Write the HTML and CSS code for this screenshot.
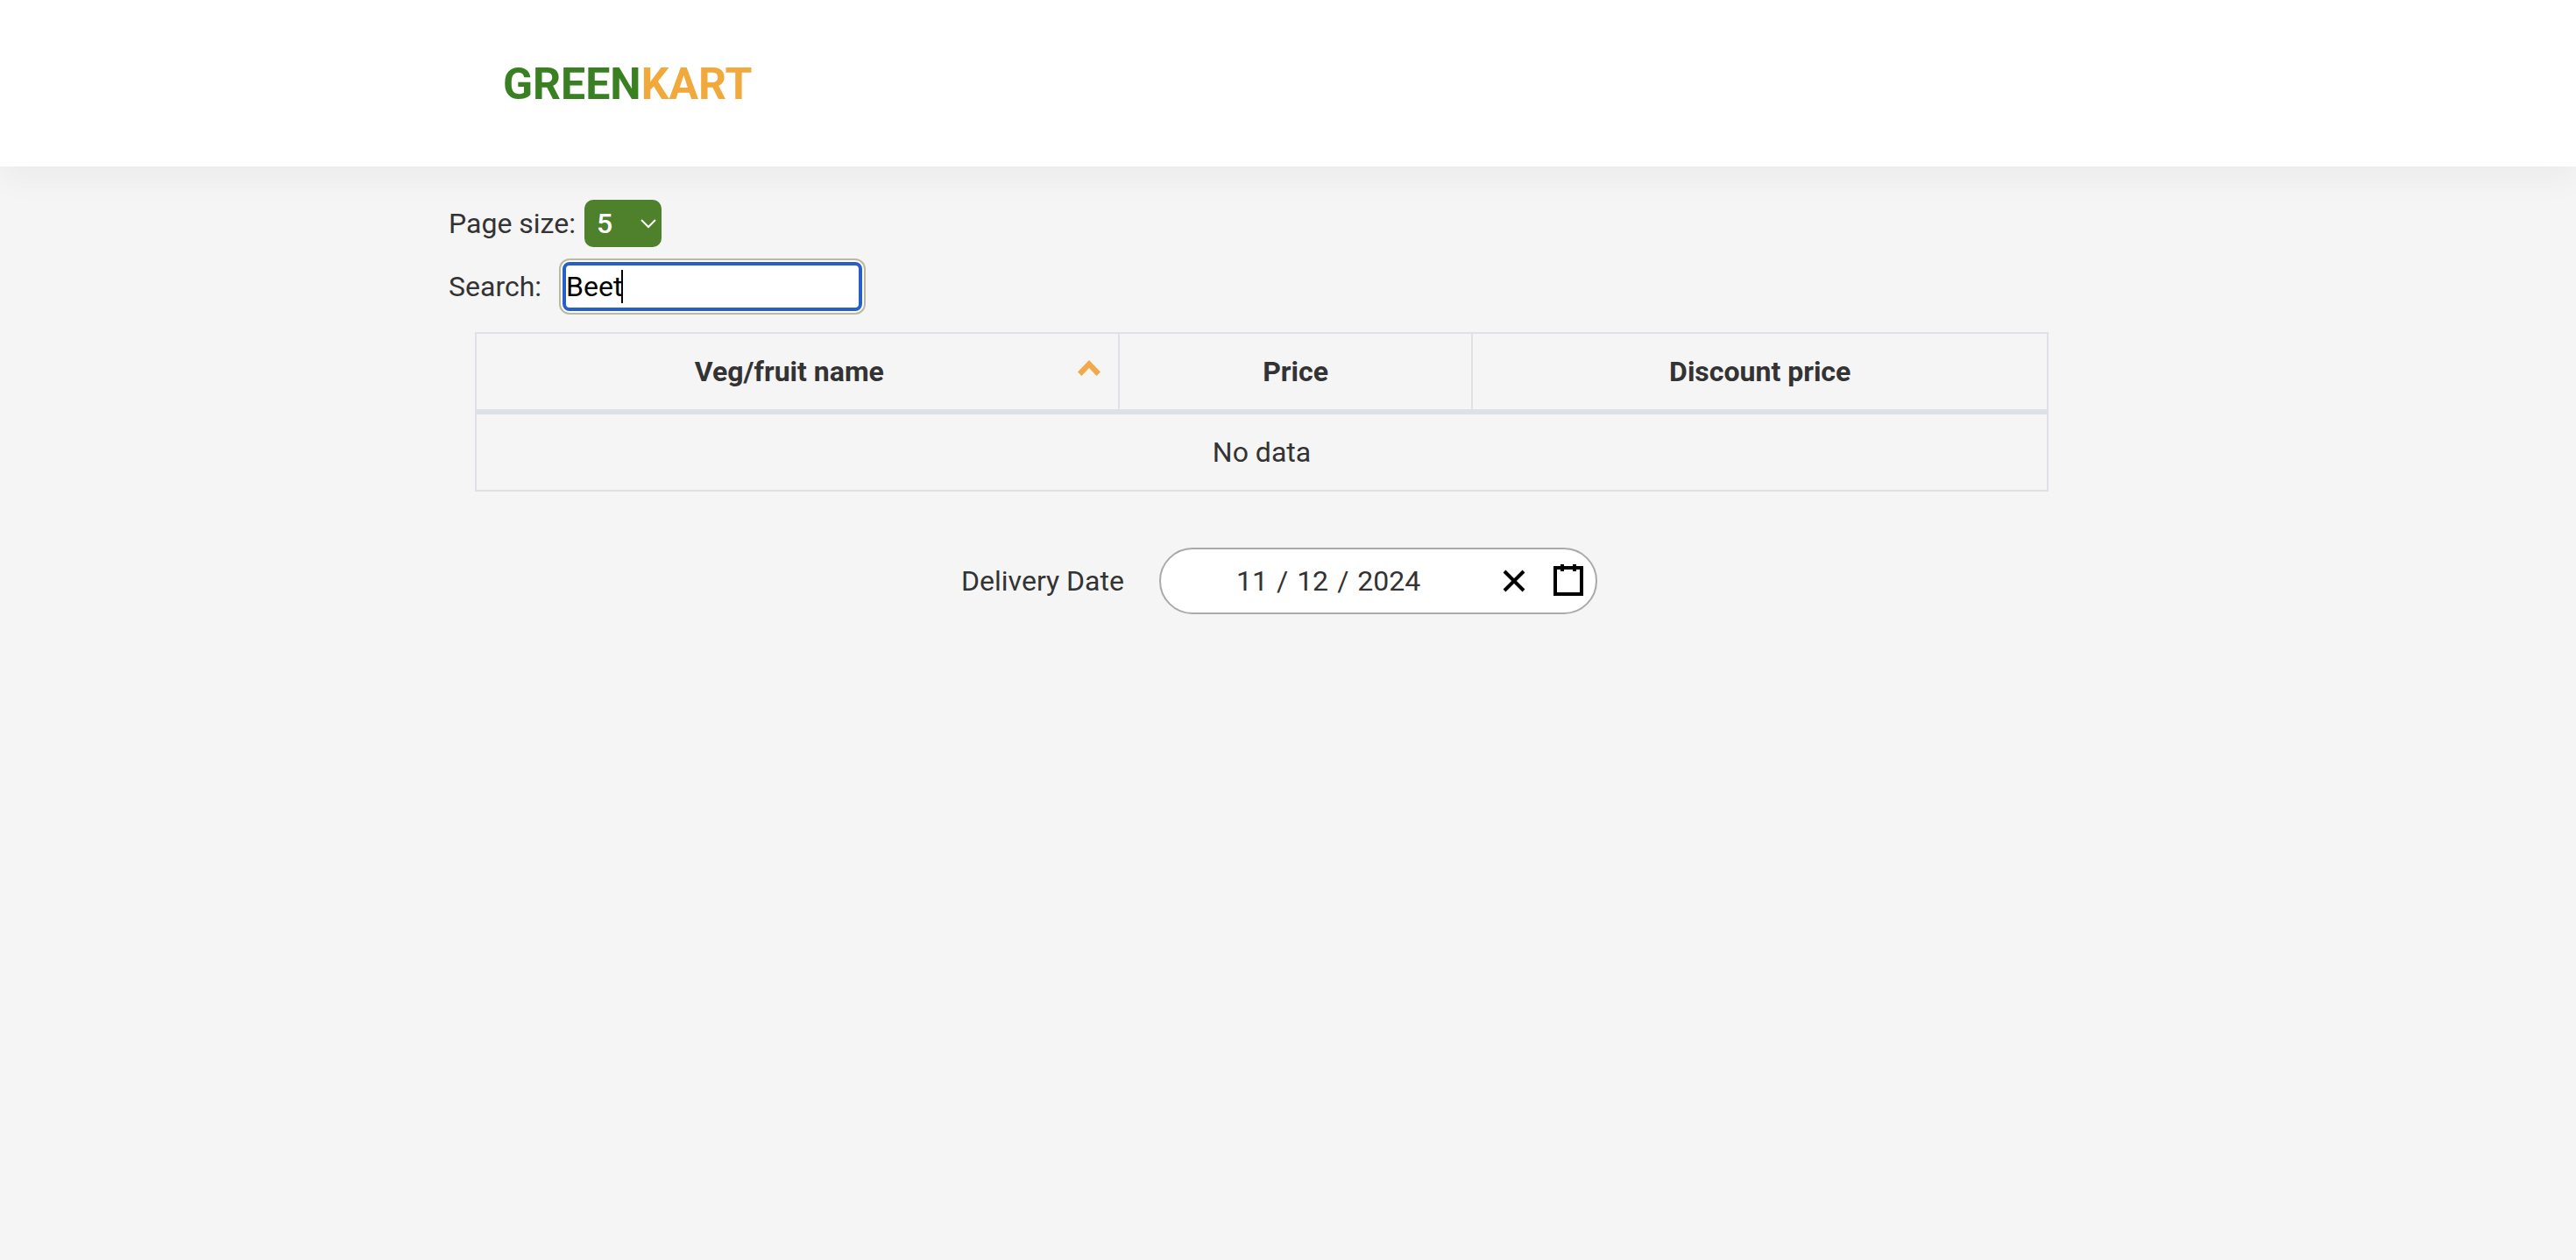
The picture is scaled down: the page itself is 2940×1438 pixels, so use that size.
FILE: index.html
```html
<!DOCTYPE html>
<html lang="en">
<head>
<meta charset="utf-8">
<title>GreenKart</title>
<link rel="stylesheet" href="styles.css">
</head>
<body>
<header class="site-header">
  <div class="container">
    <a class="brand" href="#">GREEN<span class="brand-accent">KART</span></a>
  </div>
</header>
<main class="container">
  <div class="control-row">
    <label for="page-size">Page size:</label>
    <span class="select-wrap">
      <select id="page-size" class="page-size">
        <option selected>5</option>
        <option>10</option>
        <option>20</option>
      </select>
      <svg class="chevron" viewBox="0 0 18 11" aria-hidden="true"><path d="M1 1l8 8 8-8" fill="none" stroke="#fff" stroke-width="2"/></svg>
    </span>
  </div>
  <div class="control-row search-row">
    <label for="search-field">Search:</label>
    <span class="search-wrap">
      <input id="search-field" class="search-input" type="text" value="Beet">
      <span class="text-cursor" aria-hidden="true"></span>
    </span>
  </div>
  <div class="table-wrap">
    <table class="offers">
      <colgroup><col class="col-name"><col class="col-price"><col></colgroup>
      <thead>
        <tr>
          <th scope="col" aria-sort="ascending">
            <div class="sort-head"><span class="sort-title">Veg/fruit name</span>
            <svg class="sort-icon" viewBox="0 0 26 18" aria-hidden="true"><path d="M13 0L26 13.5 21.5 18 13 9 4.500 18 0 13.500z" fill="#f1a94b"/></svg></div>
          </th>
          <th scope="col">Price</th>
          <th scope="col">Discount price</th>
        </tr>
      </thead>
      <tbody>
        <tr><td colspan="3">No data</td></tr>
      </tbody>
    </table>
  </div>
  <div class="delivery">
    <label for="month">Delivery Date</label>
    <div class="date-picker">
      <div class="date-fields">
        <input id="month" class="date-part" type="text" value="11" aria-label="Month">
        <span>/</span>
        <input class="date-part" type="text" value="12" aria-label="Day">
        <span>/</span>
        <input class="date-part date-year" type="text" value="2024" aria-label="Year">
      </div>
      <button class="icon-button" type="button" aria-label="Clear date">
        <svg viewBox="0 0 19 19" stroke="#000" stroke-width="2"><path d="M4 4l11 11M15 4L4 15"/></svg>
      </button>
      <button class="icon-button" type="button" aria-label="Open calendar">
        <svg viewBox="0 0 19 19" stroke="#000" stroke-width="2" fill="none"><rect x="2" y="2" width="15" height="15"/><path d="M6 0v4M13 0v4"/></svg>
      </button>
    </div>
  </div>
</main>
</body>
</html>
```

FILE: styles.css
```css
* {
  box-sizing: border-box;
}

body {
  margin: 0;
  padding-right: 60px;
  background: #f5f5f5;
  color: #333;
  font: 32px/48px Roboto, sans-serif;
}

input,
select,
button {
  margin: 0;
  font: inherit;
}

.container {
  max-width: 1856px;
  margin: 0 auto;
}

.site-header {
  margin-right: -60px;
  padding: 60px 60px 60px 0;
  background: #fff;
  box-shadow: 0 16px 32px rgba(0, 0, 0, 0.04);
}

.brand {
  display: block;
  padding: 2px 0 0 62px;
  color: #388022;
  font-size: 50px;
  font-weight: 700;
  line-height: 68px;
  text-decoration: none;
}

.brand-accent {
  color: #f2a93b;
}

.control-row {
  display: flex;
  align-items: center;
  gap: 10px;
  padding-top: 38px;
}

.select-wrap {
  display: grid;
  align-items: center;
}

.page-size {
  grid-area: 1 / 1;
  width: 88px;
  height: 54px;
  padding: 0 14px;
  appearance: none;
  border: 0;
  border-radius: 10px;
  background: #4f802b;
  color: #fff;
  font-weight: 500;
}

.chevron {
  grid-area: 1 / 1;
  justify-self: end;
  width: 18px;
  height: 11px;
  margin-right: 6px;
  pointer-events: none;
}

.search-row {
  gap: 24px;
  padding-top: 17px;
}

.search-wrap {
  display: flex;
  position: relative;
}

.search-input {
  width: 342px;
  height: 56px;
  padding: 0;
  border: 4px solid #275fc8;
  border-radius: 8px;
  outline: 0;
  background: #fff;
  box-shadow: 0 0 0 2px #fff, 0 0 0 4px #bab9a4;
  color: #000;
}

.text-cursor {
  position: absolute;
  top: 9px;
  left: 67px;
  width: 2px;
  height: 38px;
  background: #000;
}

.table-wrap {
  padding: 24px 30px 0;
}

.offers {
  width: 100%;
  border-collapse: collapse;
  table-layout: fixed;
  text-align: center;
}

.col-name {
  width: 40.9%;
}

.col-price {
  width: 22.5%;
}

.offers th,
.offers td {
  padding: 19px 20px;
  border: 2px solid #dee2e6;
}

.offers th {
  border-bottom-width: 6px;
}

.sort-head {
  display: flex;
  align-items: center;
}

.sort-title {
  flex: 1;
  padding-left: 8px;
}

.sort-icon {
  width: 26px;
  height: 18px;
  margin-bottom: 8px;
}

.delivery {
  display: flex;
  align-items: center;
  justify-content: center;
  gap: 40px;
  padding: 64px 0 40px 40px;
}

.date-picker {
  display: flex;
  align-items: center;
  width: 500px;
  height: 76px;
  border: 2px solid #aaa;
  border-radius: 40px;
  background: #fff;
}

.date-fields {
  display: flex;
  flex: 1;
  gap: 10px;
  padding-left: 86px;
}

.date-part {
  width: 36px;
  padding: 0;
  border: 0;
  outline: 0;
  background: none;
  color: inherit;
}

.date-year {
  width: 76px;
}

.icon-button {
  display: flex;
  padding: 8px 12px;
  border: 0;
  background: none;
}

.icon-button svg {
  width: 38px;
  height: 38px;
}
```
